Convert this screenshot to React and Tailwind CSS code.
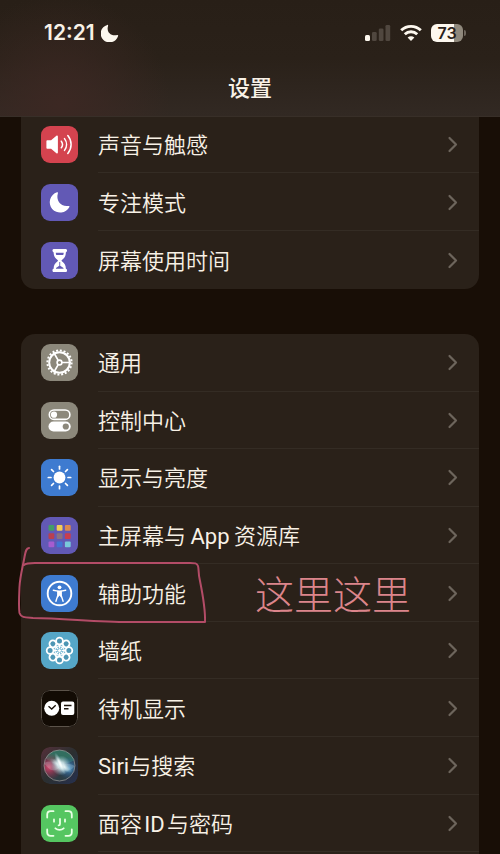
import React from "react";

const SoundIcon = () => (
  <>
    <path d="M6.5 14.2h3.6l5.3-4.4c.7-.6 1.5-.2 1.5.7v16c0 .9-.8 1.3-1.5.7l-5.3-4.4H6.5c-.7 0-1.1-.4-1.1-1.1v-6.4c0-.7.4-1.1 1.1-1.1z" fill="#fff" />
    <g fill="none" stroke="#fff" strokeWidth="1.5" strokeLinecap="round">
      <path d="M20.3 15.2c1.5 2 1.5 4.6 0 6.6" />
      <path d="M23.5 12.6c2.7 3.5 2.7 8.3 0 11.8" />
      <path d="M26.8 9.6c4.4 5.2 4.4 12.6 0 17.8" />
    </g>
  </>
);

const FocusIcon = () => (
  <path d="M16 8.3c.6-.3 1.2.3.9.9-2.3 7.2 3 13.9 10.6 12.7.7-.1 1.2.5.9 1.1A10.4 10.4 0 1 1 16 8.3z" fill="#fff" />
);

const HourglassIcon = () => (
  <>
    <path d="M12.6 7h12.3c1.4 0 1.6 3 0 3.2-.1 4.1-1.5 5.9-4 7.7-.5.4-.5.9 0 1.3 2.5 1.8 3.9 3.6 4 7.6 1.6.2 1.4 3.2 0 3.2H12.6c-1.4 0-1.6-3 0-3.2.1-4 1.5-5.8 4-7.6.5-.4.5-.9 0-1.3-2.5-1.8-3.9-3.6-4-7.7-1.6-.2-1.4-3.2 0-3.2z" fill="#fff" />
    <path d="M14.8 10.7h7.9c0 1-.2 1.7-.5 2.4h-6.9c-.3-.7-.5-1.4-.5-2.4zM18.3 20h.9v3.8l3.3 2.2v.7H15V26l3.3-2.2z" fill="#6259b5" />
  </>
);

const GearIcon = () => (
  <g fill="none" stroke="#fff">
    <circle cx="18.5" cy="18.5" r="12.1" strokeWidth="2" strokeDasharray="2 1.801" />
    <circle cx="18.5" cy="18.5" r="10.3" strokeWidth="2" />
    <circle cx="18.5" cy="18.5" r="2.4" strokeWidth="1.6" />
    <path d="M21 18.5h9M17.2 16.3l-4.5-7.8M17.2 20.7l-4.5 7.8" strokeWidth="1.7" />
  </g>
);

const ControlIcon = () => (
  <>
    <rect x="8.3" y="8" width="20.6" height="9.4" rx="4.7" fill="none" stroke="#fff" strokeWidth="1.6" />
    <circle cx="13" cy="12.7" r="3.1" fill="#fff" />
    <rect x="7.5" y="19.5" width="22.2" height="10" rx="5" fill="#fff" />
    <circle cx="24.8" cy="24.5" r="3.1" fill="#8c887b" />
  </>
);

const SunIcon = () => (
  <>
    <circle cx="18.5" cy="18.5" r="5.9" fill="#fff" />
    <g stroke="#fff" strokeWidth="1.7" strokeLinecap="round">
      {[0, 45, 90, 135, 180, 225, 270, 315].map((deg) => (
        <path key={deg} d="M18.5 10V7.3" transform={`rotate(${deg} 18.5 18.5)`} />
      ))}
    </g>
  </>
);

const appColors = [
  "#449d68", "#f4cd55", "#dc8a4f",
  "#b9404f", "#8a7280", "#c93e4e",
  "#a65ccf", "#4374d4", "#79c9da",
];

const HomeIcon = () =>
  appColors.map((color, i) => (
    <rect key={color} x={7.5 + (i % 3) * 8.2} y={8 + Math.floor(i / 3) * 8.2} width="5.8" height="5.8" rx="1" fill={color} />
  ));

const AccessibilityIcon = () => (
  <>
    <circle cx="18.5" cy="18.5" r="11.8" fill="none" stroke="#fff" strokeWidth="1.9" />
    <circle cx="18.5" cy="12.3" r="1.9" fill="#fff" />
    <path d="M12.3 15.2l4.6.9v4l-2 6.2M24.7 15.2l-4.6.9v4l2 6.2" fill="none" stroke="#fff" strokeWidth="1.4" strokeLinecap="round" strokeLinejoin="round" />
    <path d="M16.4 15.4h4.2v5l.5 2H20l-1.5-1.8-1.5 1.8h-1.1l.5-2z" fill="#fff" />
  </>
);

const FlowerIcon = () => (
  <g fill="none" stroke="#fff" strokeWidth="1.8">
    {[0, 45, 90, 135, 180, 225, 270, 315].map((deg) => (
      <g key={deg} transform={`rotate(${deg} 18.5 18.5)`}>
        <circle cx="18.5" cy="9.1" r="3.4" fill="#00000018" />
        <path d="M18.5 12.5v4" strokeWidth="1.5" />
      </g>
    ))}
    <circle cx="18.5" cy="18.5" r="4.6" strokeWidth="1.2" />
    <circle cx="18.5" cy="18.5" r="1.5" fill="#fff" stroke="none" />
  </g>
);

const StandbyIcon = () => (
  <>
    <rect x=".5" y=".5" width="36" height="36" rx="8" fill="#120b04" stroke="#5b534a" />
    <circle cx="10.7" cy="18.2" r="7.5" fill="#fff" />
    <rect x="20" y="11.5" width="13.3" height="13.4" rx="2" fill="#fff" />
    <path d="M7.5 16.3l3.2 2.7 4-3.8M23 15.5h7.5M23 18.8h4.5" fill="none" stroke="#1c130b" strokeWidth="1.4" />
  </>
);

const SiriIcon = () => (
  <>
    <defs>
      <linearGradient id="siriBase" x1="0" y1="0" x2="1" y2="1">
        <stop offset="0" stopColor="#55303a" />
        <stop offset=".5" stopColor="#2b2f30" />
        <stop offset="1" stopColor="#26304f" />
      </linearGradient>
      <radialGradient id="siriGlow">
        <stop offset="0" stopColor="#fff" />
        <stop offset=".3" stopColor="#eef8f8" stopOpacity=".85" />
        <stop offset="1" stopColor="#9cc6d0" stopOpacity="0" />
      </radialGradient>
      <radialGradient id="siriRed">
        <stop offset="0" stopColor="#d8466c" />
        <stop offset="1" stopColor="#9c2445" stopOpacity="0" />
      </radialGradient>
      <radialGradient id="siriBlue">
        <stop offset="0" stopColor="#4a98cc" />
        <stop offset="1" stopColor="#234e8c" stopOpacity="0" />
      </radialGradient>
      <clipPath id="siriOrb">
        <circle cx="18.5" cy="18.5" r="15.5" />
      </clipPath>
    </defs>
    <rect width="37" height="37" rx="8.5" fill="url(#siriBase)" />
    <g clipPath="url(#siriOrb)">
      <rect width="37" height="37" fill="#2c3c43" />
      <ellipse cx="20" cy="8" rx="16" ry="9" fill="#35836b" opacity=".7" />
      <circle cx="8" cy="20" r="14" fill="url(#siriRed)" />
      <circle cx="28" cy="21" r="12" fill="url(#siriBlue)" />
      <path d="M3 16c7-3 12-1 16 3 4-3 9-3 15 0-5 6-10 6-15 1-5 5-10 5-16-4z" fill="#c8dce4" opacity=".25" />
      <circle cx="20" cy="18.5" r="10" fill="url(#siriGlow)" />
      <ellipse cx="20" cy="18.5" rx="13" ry="4" transform="rotate(30 20 18.5)" fill="url(#siriGlow)" />
      <ellipse cx="19" cy="16.5" rx="12" ry="3" transform="rotate(65 19 16.5)" fill="url(#siriGlow)" />
    </g>
    <circle cx="18.5" cy="18.5" r="15.5" fill="none" stroke="#a6a1a0" strokeOpacity=".65" />
  </>
);

const FaceIcon = () => (
  <g fill="none" stroke="#e9ffe5" strokeWidth="1.8" strokeLinecap="round" strokeLinejoin="round">
    <path d="M6.2 12.5V9.7c0-2.2 1.3-3.5 3.5-3.5h2.8M24.5 6.2h2.8c2.2 0 3.5 1.3 3.5 3.5v2.8M30.8 24.5v2.8c0 2.2-1.3 3.5-3.5 3.5h-2.8M12.5 30.8H9.7c-2.2 0-3.5-1.3-3.5-3.5v-2.8" />
    <path d="M13 14.5v2.2M24 14.5v2.2M19 14v5c0 .9-.4 1.3-1.4 1.3M14.4 23.3c2.3 2.1 6 2.1 8.3 0" />
  </g>
);

const topItems = [
  { name: "声音与触感", bg: "bg-[#d4434f]", icon: SoundIcon },
  { name: "专注模式", bg: "bg-[#6259b5]", icon: FocusIcon },
  { name: "屏幕使用时间", bg: "bg-[#6259b5]", icon: HourglassIcon },
];

const mainItems = [
  { name: "通用", bg: "bg-[#8c887b]", icon: GearIcon },
  { name: "控制中心", bg: "bg-[#8c887b]", icon: ControlIcon },
  { name: "显示与亮度", bg: "bg-[#3e7bd0]", icon: SunIcon },
  { name: "主屏幕与\u2009App\u2009资源库", bg: "bg-[#6259b5]", icon: HomeIcon },
  { name: "辅助功能", bg: "bg-[#3e7bd0]", icon: AccessibilityIcon, marked: true },
  { name: "墙纸", bg: "bg-[#55a6c7]", icon: FlowerIcon },
  { name: "待机显示", bg: "bg-black", icon: StandbyIcon },
  { name: "Siri与搜索", bg: "bg-[#2a2119]", icon: SiriIcon },
  { name: "面容\u200AID\u200A与密码", bg: "bg-[#55c661]", icon: FaceIcon },
];

const Marker = () => (
  <>
    <svg className="absolute -top-5 -left-1 h-[84px] w-[194px] pointer-events-none" viewBox="0 0 194 84" fill="none" aria-hidden="true">
      <path
        d="M12 4C9 4 8.5 8 7.5 13C6 22 3 32 2.5 43C2 54 1.5 63 2.5 69C4 74 9 73.5 16 74C48 74.5 80 78 112 78H188C188.5 67 186 52 183 37C181 29 182 25 181 22C180 19 178 19 173 19H18C13 19 9 19 7 21"
        stroke="#b34c67"
        strokeWidth="2"
        strokeLinecap="round"
        strokeLinejoin="round"
      />
    </svg>
    <span className="absolute inset-y-0 right-[68px] flex items-center pt-1.5 text-[39px] leading-none font-light text-[#dc858b] pointer-events-none">
      这里这里
    </span>
  </>
);

const Row = ({ item, className }) => {
  const Icon = item.icon;
  return (
    <li className={`relative flex ${className}`}>
      <a href="#" className="flex flex-1 items-center gap-5 pl-5">
        <span className={`w-[37px] h-[37px] shrink-0 rounded-[9px] overflow-hidden ${item.bg}`}>
          <svg viewBox="0 0 37 37" className="w-full h-full" aria-hidden="true">
            <Icon />
          </svg>
        </span>
        <span className="row-body flex flex-1 self-stretch items-center justify-between pr-5 border-b border-[#342c24]">
          <span className="pt-1 font-['Roboto','Noto_Sans_CJK_SC_DemiLight','Noto_Sans_CJK_SC',sans-serif] text-[22px] leading-8">
            {item.name}
          </span>
          <svg width="12" height="18" viewBox="0 0 12 18" fill="none" aria-hidden="true">
            <path d="M2.5 3l6.5 6.500-6.500 6.500" stroke="#6d655c" strokeWidth="2.2" strokeLinecap="round" strokeLinejoin="round" />
          </svg>
        </span>
      </a>
      {item.marked && <Marker />}
    </li>
  );
};

const StatusBar = () => (
  <div className="flex items-center justify-between pt-4 pl-11 pr-[34px]">
    <div className="flex items-center gap-1.5 h-[34px]">
      <span className="font-['Inter','Noto_Sans_CJK_SC',sans-serif] text-[21px] leading-8 font-semibold">12:21</span>
      <svg width="18" height="18" viewBox="0 0 18 18" aria-hidden="true">
        <path d="M6.2.9c.6-.3 1.1.2.9.8-2 6.3 2.6 11 9.2 9.3.6-.2 1.1.4.8 1A8.9 8.9 0 1 1 6.2.9z" fill="#fdf8ef" />
      </svg>
    </div>
    <div className="flex items-center gap-[9px]">
      <svg width="26" height="18" viewBox="0 0 26 18" fill="#50473f" aria-hidden="true">
        <rect x="0" y="11" width="5" height="6" rx="1.5" fill="#fdf8ef" />
        <rect x="7" y="8" width="4.7" height="9" rx="1.3" />
        <rect x="13.8" y="4.5" width="4.7" height="12.5" rx="1.3" />
        <rect x="20.5" y="1" width="4.7" height="16" rx="1.3" />
      </svg>
      <svg width="22" height="18" viewBox="0 0 22 18" fill="none" stroke="#fdf8ef" strokeWidth="2.9" aria-hidden="true">
        <path d="M1.2 6.3c5.500-5.300 14.100-5.300 19.600 0" />
        <path d="M4.8 10.2c3.500-3.300 8.900-3.300 12.400 0" />
        <path d="M11 17l-3.4-3.6c2-1.7 4.8-1.7 6.8 0z" fill="#fdf8ef" stroke="none" />
      </svg>
      <div className="flex items-center gap-px">
        <span className="flex items-center justify-center w-8 h-[18px] rounded-[6px] bg-gradient-to-r from-[#fdf8ef] from-73% to-[#8f887c] to-73% font-['Inter',sans-serif] text-base leading-none font-semibold text-[#2a2119]">
          73
        </span>
        <span className="w-0.5 h-1.5 rounded-r-full bg-[#6d655c]" />
      </div>
    </div>
  </div>
);

export default function App() {
  return (
    <div
      lang="zh-CN"
      className="min-h-screen flex flex-col overflow-hidden bg-[#180e06] text-[#f8f1e6] font-['Roboto','Noto_Sans_CJK_SC',sans-serif]"
    >
      {/* header */}
      <header className="relative z-10 border-b border-[#382f28] bg-[radial-gradient(circle_at_12%_90%,#3c2823_0,#3c282300_110px),linear-gradient(#281f17,#2a2119_50%,#322923)]">
        <StatusBar />
        <h1 className="mt-5 pb-2 text-center text-[22px] leading-[38px] font-medium">设置</h1>
      </header>

      <main className="flex flex-1 flex-col -mt-0.5 px-[21px]">
        <ul className="rounded-b-[14px] bg-[#2a2119] [&>li:last-child_.row-body]:border-transparent">
          {topItems.map((item) => (
            <Row key={item.name} item={item} className="h-[58px]" />
          ))}
        </ul>

        <ul className="flex flex-1 flex-col mt-[45px] pb-0.5 rounded-t-[14px] bg-[#2a2119]">
          {mainItems.map((item) => (
            <Row key={item.name} item={item} className="flex-1 min-h-14" />
          ))}
        </ul>
      </main>
    </div>
  );
}
